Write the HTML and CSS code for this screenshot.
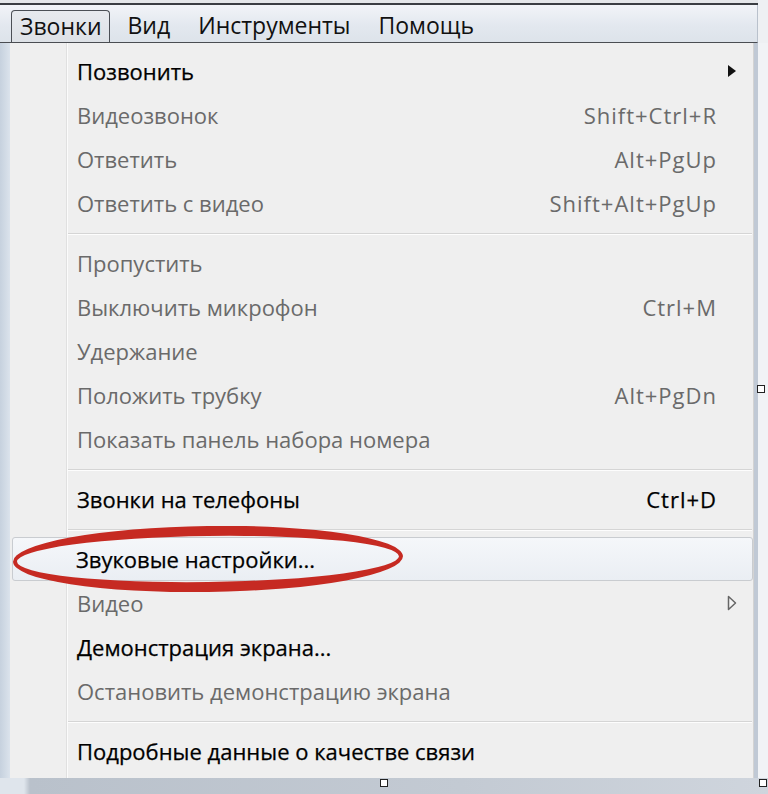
FILE: index.html
```html
<!DOCTYPE html>
<html lang="ru">
<head>
<meta charset="utf-8">
<link rel="stylesheet" href="styles.css">
</head>
<body>
<div class="screen">
  <div class="topline"></div>
  <div class="menubar">
    <span class="mb-item active">Звонки</span>
    <span class="mb-item">Вид</span>
    <span class="mb-item">Инструменты</span>
    <span class="mb-item">Помощь</span>
  </div>
  <div class="main">
    <div class="edge-left"></div>
    <div class="menu">
      <div class="item on"><span class="label">Позвонить</span>
        <svg class="arrow" width="10" height="14" viewBox="0 0 10 14"><polygon points="1,1 9,7 1,13" fill="#111"/></svg>
      </div>
      <div class="item"><span class="label">Видеозвонок</span><span class="key">Shift+Ctrl+R</span></div>
      <div class="item"><span class="label">Ответить</span><span class="key">Alt+PgUp</span></div>
      <div class="item"><span class="label">Ответить с видео</span><span class="key">Shift+Alt+PgUp</span></div>
      <div class="sep"></div>
      <div class="item"><span class="label">Пропустить</span></div>
      <div class="item"><span class="label">Выключить микрофон</span><span class="key">Ctrl+M</span></div>
      <div class="item"><span class="label">Удержание</span></div>
      <div class="item"><span class="label">Положить трубку</span><span class="key">Alt+PgDn</span></div>
      <div class="item"><span class="label">Показать панель набора номера</span></div>
      <div class="sep"></div>
      <div class="item on"><span class="label">Звонки на телефоны</span><span class="key">Ctrl+D</span></div>
      <div class="sep"></div>
      <div class="item on hot"><span class="label">Звуковые настройки...</span>
        <svg class="circle" width="400" height="72" viewBox="0 0 400 72"><path fill="#c62a22" fill-rule="evenodd" transform="rotate(-0.8 197 36)" d="M2,36 A195,33 0 1,0 392,36 A195,33 0 1,0 2,36 Z M6,36 A191,23 0 1,1 388,36 A191,23 0 1,1 6,36 Z"/></svg>
      </div>
      <div class="item"><span class="label">Видео</span>
        <svg class="arrow" width="10" height="16" viewBox="0 0 10 16"><polygon points="1.5,1.5 8.5,8 1.5,14.5" fill="#f4f4f4" stroke="#666" stroke-width="1.5" stroke-linejoin="round"/></svg>
      </div>
      <div class="item on"><span class="label">Демонстрация экрана...</span></div>
      <div class="item"><span class="label">Остановить демонстрацию экрана</span></div>
      <div class="sep"></div>
      <div class="item on"><span class="label">Подробные данные о качестве связи</span></div>
    </div>
    <div class="edge-right"><span class="handle mid"></span></div>
  </div>
  <div class="bottom"><span class="handle b1"></span><span class="handle b2"></span></div>
</div>
</body>
</html>
```
FILE: styles.css
```css
html, body { margin: 0; padding: 0; }
body { background: #eef0f3; font-family: "Open Sans", "Noto Sans", sans-serif; }
.screen { width: 768px; height: 794px; overflow: hidden; display: flex; flex-direction: column; background: #eef0f3; }
.topline { height: 5px; background: linear-gradient(#e4e6e9 0, #e4e6e9 3px, #3a3d42 3px, #3a3d42 5px); width: 758px; }
.menubar { height: 38px; width: 758px; box-sizing: border-box; display: flex; align-items: stretch; padding: 5px 0 0 11px; background: linear-gradient(#f2f4f8, #e3e8ef 55%, #dde3ea); border-bottom: 1px solid #4a4d52; border-right: 1px solid #b9c1cc; }
.mb-item { font-size: 23px; color: #111; padding: 0 14px; line-height: 31px; }
.active { border: 1px solid #4b4f55; border-bottom: none; border-radius: 4px 4px 0 0; background: linear-gradient(#e7eaee, #dde1e6); padding: 0 7px 0 8px; margin-right: 4px; }
.main { display: flex; height: 735px; }
.edge-left { width: 10px; background: linear-gradient(90deg, #c6d1de, #dbe3ec); }
.menu { width: 744px; box-sizing: border-box; padding: 6px 0 4px 0; border-right: 1px solid #d3d3d3; background: linear-gradient(90deg, #efefef 0, #efefef 56px, #e0e0e0 56px, #e0e0e0 57px, #fbfbfb 57px, #fbfbfb 58px, #efefef 58px); }
.item { height: 44px; display: flex; align-items: center; padding: 0 36px 0 67px; position: relative; font-size: 22px; color: #6a6a6a; }
.item.on { color: #000; -webkit-text-stroke: 0.25px #000; }
.label { flex: 1; white-space: nowrap; }
.key { white-space: nowrap; letter-spacing: 1px; }
.sep { height: 16px; margin-left: 58px; margin-right: 1px; background: linear-gradient(transparent 8px, #d5d5d5 8px, #d5d5d5 9px, #fdfdfd 9px, #fdfdfd 10px, transparent 10px); }
.hot { margin-left: 2px; margin-right: 0; padding-left: 63px; border: 1px solid #c9ccd0; border-radius: 3px; height: 42px; background: linear-gradient(#f5f7fa, #eaeef3); }
.circle { position: absolute; left: -2px; top: -15px; }
.arrow { margin-right: -20px; }
.edge-right { width: 14px; position: relative; background: linear-gradient(90deg, #c0c9d5 0, #c0c9d5 4px, #f1f3f6 4px); }
.bottom { flex: 1; position: relative; background: linear-gradient(90deg, #dfe5ec 0, #dfe5ec 24px, #b9c1cb 30px, #c3cad3 60%, #cfd5dd 100%); }
.handle { position: absolute; width: 6px; height: 6px; border: 1px solid #222; background: #fff; }
.mid { left: 3px; top: 342px; }
.b1 { left: 380px; top: 1px; }
.b2 { left: 759px; top: 1px; }
```
